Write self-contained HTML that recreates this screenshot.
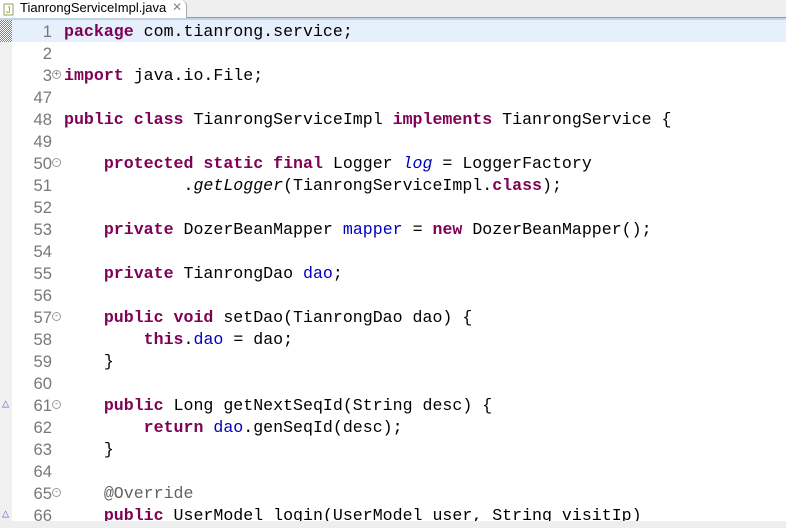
<!DOCTYPE html>
<html><head><meta charset="utf-8"><style>
body{margin:0;width:786px;height:528px;overflow:hidden;background:#fff;position:relative;font-family:"Liberation Mono",monospace}
.tabbar{position:absolute;left:0;top:0;width:786px;height:17px;background:#efefef;border-bottom:1px solid #999}
.tabbar2{position:absolute;left:0;top:18px;width:786px;height:2px;background:#c3d2e4}
.tab{position:absolute;left:0;top:0;width:186px;height:18px;background:#fff;border-right:1px solid #aaa;border-radius:0 6px 0 0;font:13px "Liberation Sans",sans-serif;color:#000}
.tab span{position:absolute;left:20px;top:0px}
.tab i{position:absolute;left:172px;top:0;font-style:normal;color:#888;font-size:12px}
.gut{position:absolute;left:0;top:20px;width:12px;height:501px;background:#f0f0f0}
.gsel{position:absolute;left:0;top:20px;width:12px;height:22px;background:repeating-conic-gradient(#3b8fd8 0 25%,#fff 0 50%) 0 0/2px 2px}
.hl{position:absolute;left:12px;top:20px;width:774px;height:22px;background:#e6f0fc}
.ln{position:absolute;left:12px;width:40px;text-align:right;color:#787878;font-size:16.6px;line-height:22px;font-family:"Liberation Sans",sans-serif}
.code{position:absolute;left:64px;font-size:16.6px;line-height:22px;white-space:pre;color:#000}
.k{color:#7f0055;font-weight:bold}.f{color:#0000c0}.i{font-style:italic}.a{color:#646464}
.fold{position:absolute;left:52px;width:7px;height:7px;border:1px solid #999;border-radius:50%;font-size:8px;line-height:7px;text-align:center;color:#666}
.tri{position:absolute;left:2px;color:#7b68c8;font-size:12px}
.sb{position:absolute;left:0;top:521px;width:786px;height:7px;background:#eee}
</style></head><body>
<div class="tabbar"><div class="tab"><span>TianrongServiceImpl.java</span><i>✕</i>
<svg style="position:absolute;left:3px;top:2px" width="12" height="14"><rect x="1" y="2" width="9" height="11" fill="#fff" stroke="#8a6" /><text x="3" y="11" font-size="9" fill="#b80" font-family="Liberation Sans">J</text></svg></div></div>
<div class="tabbar2"></div>
<div class="gut"></div><div class="gsel"></div>
<div class="hl"></div>
<div class="sb"></div>
<div class="ln" style="top:21px">1<br>2<br>3<br>47<br>48<br>49<br>50<br>51<br>52<br>53<br>54<br>55<br>56<br>57<br>58<br>59<br>60<br>61<br>62<br>63<br>64<br>65<br>66</div>
<div class="fold" style="top:70px">+</div>
<div class="fold" style="top:158px">-</div>
<div class="fold" style="top:312px">-</div>
<div class="fold" style="top:400px">-</div>
<div class="fold" style="top:488px">-</div>
<div class="tri" style="top:396px">△</div>
<div class="tri" style="top:506px">△</div>
<div class="code" style="top:21px;height:500px;overflow:hidden"><span class="k">package</span> com.tianrong.service;

<span class="k">import</span> java.io.File;

<span class="k">public class</span> TianrongServiceImpl <span class="k">implements</span> TianrongService {

    <span class="k">protected static final</span> Logger <span class="f i">log</span> = LoggerFactory
            .<span class="i">getLogger</span>(TianrongServiceImpl.<span class="k">class</span>);

    <span class="k">private</span> DozerBeanMapper <span class="f">mapper</span> = <span class="k">new</span> DozerBeanMapper();

    <span class="k">private</span> TianrongDao <span class="f">dao</span>;

    <span class="k">public void</span> setDao(TianrongDao dao) {
        <span class="k">this</span>.<span class="f">dao</span> = dao;
    }

    <span class="k">public</span> Long getNextSeqId(String desc) {
        <span class="k">return</span> <span class="f">dao</span>.genSeqId(desc);
    }

    <span class="a">@Override</span>
    <span class="k">public</span> UserModel login(UserModel user, String visitIp)</div>
</body></html>
